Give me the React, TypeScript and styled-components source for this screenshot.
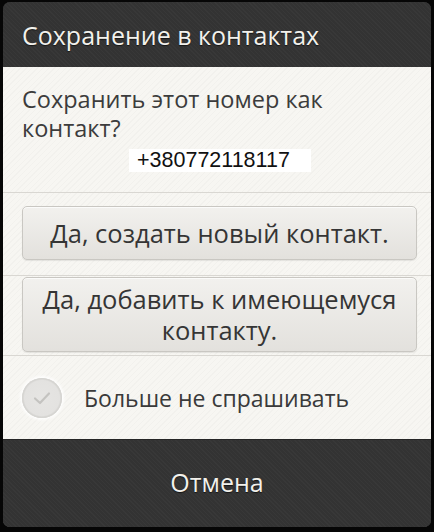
import React from "react";
import styled, { createGlobalStyle } from "styled-components";

const Global = createGlobalStyle`
  html, body { margin: 0; padding: 0; background: #060606; }
  body { font-family: "Open Sans", "Noto Sans", sans-serif; }
`;

const Screen = styled.div`
  width: 434px;
  height: 532px;
  box-sizing: border-box;
  padding: 2px 3px 5px 3px;
  background: #060606;
`;

const Dialog = styled.div`
  height: 525px;
  border-radius: 7px;
  overflow: hidden;
  display: flex;
  flex-direction: column;
  background: #323232;
  box-shadow: inset 0 -1px 0 #4a4a4a;
`;

const darkTexture = `
  background-color: #333333;
  background-image: repeating-linear-gradient(
    45deg,
    rgba(255,255,255,0.025) 0px,
    rgba(255,255,255,0.025) 1px,
    rgba(0,0,0,0) 1px,
    rgba(0,0,0,0) 3px
  );
`;

const Header = styled.div`
  ${darkTexture}
  height: 65px;
  flex: none;
  display: flex;
  align-items: center;
  padding-left: 19px;
  padding-top: 1px;
  box-sizing: border-box;
  color: #f2f1ec;
  font-size: 25px;
  text-shadow: 0 1px 1px rgba(0,0,0,0.6);
`;

const Body = styled.div`
  height: 372px;
  flex: none;
  display: flex;
  flex-direction: column;
  background-color: #f7f6f2;
  background-image: repeating-linear-gradient(
    -45deg,
    rgba(0,0,0,0.018) 0px,
    rgba(0,0,0,0.018) 1px,
    rgba(0,0,0,0) 1px,
    rgba(0,0,0,0) 4px
  );
`;

const Message = styled.div`
  height: 126px;
  box-sizing: border-box;
  padding: 18px 10px 0 19px;
  border-bottom: 1px solid #d9d7d2;
  color: #3c3c3c;
  font-size: 23.5px;
  line-height: 29px;
  white-space: nowrap;
`;

const Phone = styled.div`
  width: 182px;
  height: 23px;
  box-sizing: border-box;
  margin: 6px 0 0 107px;
  padding-left: 8px;
  background: #ffffff;
  color: #111111;
  font-family: "Liberation Sans", Arial, sans-serif;
  font-size: 21.5px;
  line-height: 23px;
`;

const ButtonRow = styled.div<{ $h: number; $pt: number }>`
  height: ${(p) => p.$h}px;
  box-sizing: border-box;
  padding: ${(p) => p.$pt}px 14px 0 19px;
  border-bottom: 1px solid #d9d7d2;
`;

const Button = styled.div<{ $h: number }>`
  height: ${(p) => p.$h}px;
  box-sizing: border-box;
  display: flex;
  align-items: center;
  justify-content: center;
  text-align: center;
  white-space: nowrap;
  border: 1px solid #c9c7c2;
  border-radius: 5px;
  background: linear-gradient(#f2f1ee, #e3e1dd);
  box-shadow: inset 0 1px 0 #fbfbfa, 0 1px 1px rgba(0,0,0,0.08);
  color: #353535;
  font-size: 25.5px;
  line-height: 31px;
  padding-top: 1px;
`;

const CheckRow = styled.div`
  flex: 1;
  display: flex;
  align-items: center;
  padding: 0 0 0 19px;
  gap: 22px;
  color: #3a3a3a;
  font-size: 23px;
`;

const CheckCircle = styled.div`
  width: 40px;
  height: 40px;
  border-radius: 50%;
  box-sizing: border-box;
  display: flex;
  align-items: center;
  justify-content: center;
  background: radial-gradient(circle at 50% 50%, #e6e5e3 0%, #e3e2e0 62%, #d5d4d1 68%, #eae9e7 76%, #dedddb 100%);
  box-shadow: 0 0 3px 2px rgba(255,255,255,0.9), inset 0 0 0 1px #d6d5d2;
`;

const Footer = styled.div`
  ${darkTexture}
  flex: 1;
  display: flex;
  align-items: center;
  justify-content: center;
  padding-bottom: 3px;
  color: #f2f1ec;
  font-size: 25px;
  border-top: 1px solid #262626;
  text-shadow: 0 1px 1px rgba(0,0,0,0.6);
`;

export default function App() {
  return (
    <>
      <Global />
      <Screen>
        <Dialog>
          <Header>Сохранение в контактах</Header>
          <Body>
            <Message>
              Сохранить этот номер как
              <br />
              контакт?
              <Phone>+380772118117</Phone>
            </Message>
            <ButtonRow $h={83} $pt={13}>
              <Button $h={54}>Да, создать новый контакт.</Button>
            </ButtonRow>
            <ButtonRow $h={80} $pt={1}>
              <Button $h={75}>
                Да, добавить к имеющемуся
                <br />
                контакту.
              </Button>
            </ButtonRow>
            <CheckRow>
              <CheckCircle>
                <svg width="24" height="24" viewBox="0 0 24 24">
                  <path
                    d="M5 12.5 L10 17 L19 7.5"
                    fill="none"
                    stroke="#c4c3c0"
                    strokeWidth="2.2"
                    strokeLinecap="round"
                    strokeLinejoin="round"
                  />
                </svg>
              </CheckCircle>
              Больше не спрашивать
            </CheckRow>
          </Body>
          <Footer>Отмена</Footer>
        </Dialog>
      </Screen>
    </>
  );
}
